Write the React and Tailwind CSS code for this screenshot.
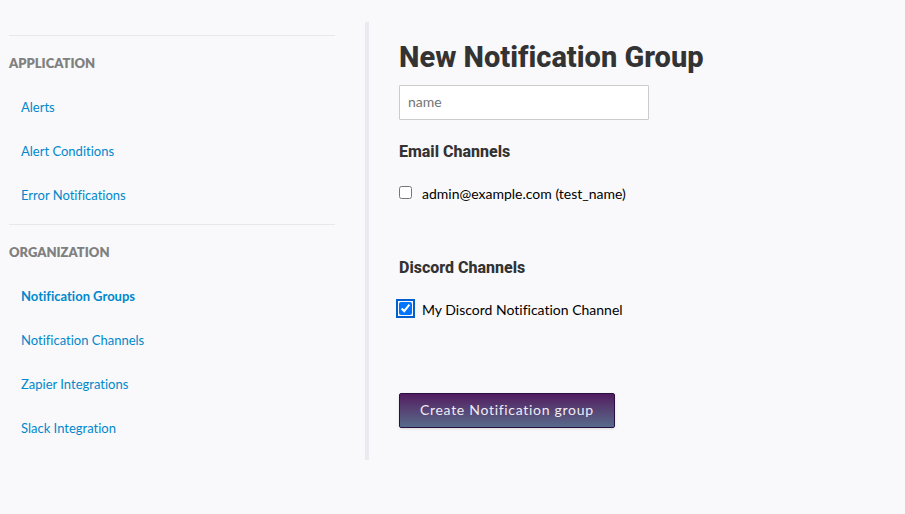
import React from "react";

const sections = [
  {
    title: "Application",
    links: ["Alerts", "Alert Conditions", "Error Notifications"],
  },
  {
    title: "Organization",
    links: [
      "Notification Groups",
      "Notification Channels",
      "Zapier Integrations",
      "Slack Integration",
    ],
  },
];

function Sidebar({ active }) {
  return (
    <nav className="w-full sm:w-[326px] shrink-0 pt-[13px]">
      {sections.map((section) => (
        <section
          key={section.title}
          className="border-t border-[#e8e8ea] pt-[6px] pb-[6px]"
        >
          <h2 className="flex h-11 items-center text-[13px] font-extrabold uppercase text-[#808080]">
            {section.title}
          </h2>
          <ul className="pl-3">
            {section.links.map((link) => (
              <li key={link} className="flex h-11 items-center">
                <a
                  href="#"
                  className={
                    link === active
                      ? "text-[13px] font-bold text-[#0088cc]"
                      : "text-[13px] text-[#0088cc]"
                  }
                >
                  {link}
                </a>
              </li>
            ))}
          </ul>
        </section>
      ))}
    </nav>
  );
}

function ChannelList({ title, channel, checked, className }) {
  return (
    <section className={className}>
      <h2 className="mb-[15px] font-['Roboto',sans-serif] text-base leading-6 font-extrabold text-[#333333]">
        {title}
      </h2>
      <label className="flex h-[30px] items-center gap-[10px] text-sm text-black">
        <input
          type="checkbox"
          defaultChecked={checked}
          className="mb-[3px] size-[13px] shrink-0 rounded-[2px] checked:outline-2 checked:outline-offset-1 checked:outline-[#0060d0]"
        />
        {channel}
      </label>
    </section>
  );
}

function App() {
  return (
    <div className="flex min-h-screen flex-col items-start gap-[30px] bg-[#f9f9fb] px-[9px] pt-[22px] font-['Lato',sans-serif] [font-variant-ligatures:none] sm:flex-row">
      <Sidebar active="Notification Groups" />
      <main className="min-w-0 flex-1 border-l-4 border-[#ebeaf1] pt-[15px] pb-8 pl-[30px]">
        <form onSubmit={(e) => e.preventDefault()}>
          <h1 className="mb-2 font-['Roboto',sans-serif] text-[29px] leading-10 font-extrabold text-[#333333]">
            New Notification Group
          </h1>
          <input
            type="text"
            placeholder="name"
            aria-label="name"
            className="block h-[35px] w-full max-w-[250px] rounded-[1px] border border-[#cccccc] bg-white px-2 pb-[2px] text-sm text-[#333333] placeholder:text-[#757575]"
          />
          <ChannelList
            title="Email Channels"
            channel="admin@example.com (test_name)"
            className="mt-5"
          />
          <ChannelList
            title="Discord Channels"
            channel="My Discord Notification Channel"
            checked
            className="mt-[47px]"
          />
          <button
            type="submit"
            className="mt-[68px] block h-[35px] rounded-[2px] border border-[#2a1040] bg-linear-to-b from-[#501b60] to-[#566a8b] px-5 pb-[2px] text-sm tracking-wider text-[#f0ecf4] shadow-sm"
          >
            Create Notification group
          </button>
        </form>
      </main>
    </div>
  );
}

export default App;
